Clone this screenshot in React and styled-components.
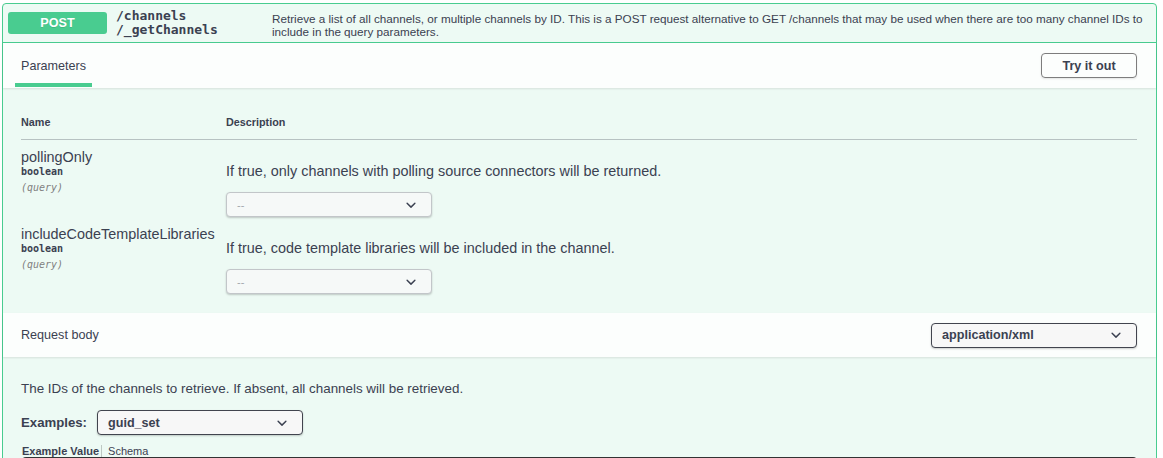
import React from "react";
import styled, { createGlobalStyle } from "styled-components";

const GlobalStyle = createGlobalStyle`
  html, body {
    margin: 0;
    padding: 0;
    overflow: hidden;
    background: #ffffff;
    font-family: "Liberation Sans", Arial, sans-serif;
    color: #3b4151;
  }
  * { box-sizing: border-box; }
`;

const Page = styled.div`
  padding: 3px 6px 0 2px;
`;

const OpBlock = styled.div`
  border: 1px solid #49cc90;
  border-radius: 4px;
  background: #edfaf4;
`;

const Summary = styled.div`
  display: flex;
  align-items: center;
  height: 39px;
  padding: 5px;
  border-bottom: 1px solid #49cc90;
`;

const Method = styled.div`
  width: 99px;
  height: 22px;
  flex-shrink: 0;
  display: flex;
  align-items: center;
  justify-content: center;
  background: #49cc90;
  border-radius: 3px;
  color: #ffffff;
  font-size: 12.6px;
  font-weight: 700;
  text-shadow: 0 1px 0 rgba(0, 0, 0, 0.1);
`;

const Path = styled.div`
  width: 156px;
  flex-shrink: 0;
  padding-left: 9px;
  font-family: "DejaVu Sans Mono", "Liberation Mono", monospace;
  font-size: 13px;
  font-weight: 600;
  line-height: 14px;
  color: #3b4151;
`;

const PathLine = styled.span`
  display: block;
  white-space: nowrap;
`;

const SummaryDesc = styled.div`
  flex: 1;
  padding: 4px 0 0 9px;
  font-size: 11.7px;
  line-height: 13px;
  color: #3b4151;
`;

const SectionHeader = styled.div`
  display: flex;
  align-items: center;
  justify-content: space-between;
  height: ${(p) => p.$h}px;
  padding: 0 19px 0 18px;
  background: rgba(255, 255, 255, 0.8);
  box-shadow: 0 1px 2px rgba(0, 0, 0, 0.1);
`;

const TabItem = styled.div`
  align-self: flex-start;
  margin: 15px 0 0 -6px;
  padding: 0 6px 9px;
  font-size: 12.6px;
  line-height: 16px;
  border-bottom: 4px solid #49cc90;
`;

const SectionTitle = styled.div`
  font-size: 12.6px;
  line-height: 16px;
`;

const Button = styled.button`
  width: 96px;
  height: 25px;
  padding: 0;
  border: 1px solid #7d7d7d;
  border-radius: 4px;
  background: transparent;
  box-shadow: 0 1px 2px rgba(0, 0, 0, 0.1);
  font-family: inherit;
  font-size: 12.6px;
  font-weight: 700;
  color: #3b4151;
`;

const ParamsBody = styled.div`
  padding: 26px 19px 19px 18px;
`;

const Row = styled.div`
  display: grid;
  grid-template-columns: 205px 1fr;
  border-bottom: ${(p) => (p.$head ? "1px solid rgba(59,65,81,0.3)" : "none")};
`;

const HeadCell = styled.div`
  font-size: 10.8px;
  font-weight: 700;
  line-height: 15px;
  padding: 1px 0 9px;
`;

const NameCell = styled.div`
  padding-top: 9px;
`;

const ParamName = styled.div`
  font-size: 14.4px;
  line-height: 17px;
`;

const ParamType = styled.div`
  font-family: "DejaVu Sans Mono", "Liberation Mono", monospace;
  font-size: 10px;
  line-height: 12px;
  font-weight: 700;
`;

const ParamIn = styled.div`
  padding-top: 4px;
  font-family: "DejaVu Sans Mono", "Liberation Mono", monospace;
  font-size: 10px;
  line-height: 12px;
  font-style: italic;
  color: #808080;
`;

const DescCell = styled.div`
  padding-top: 23px;
`;

const DescText = styled.div`
  font-size: 14.4px;
  line-height: 16px;
  margin-bottom: 13px;
`;

const SelectBox = styled.div`
  display: flex;
  align-items: center;
  width: 206px;
  height: 25px;
  padding: 0 10px;
  background: ${(p) => (p.$disabled ? "#f6f9f8" : "#f7f7f7")};
  border: 1px solid ${(p) => (p.$disabled ? "#c2c6c9" : "#41444e")};
  border-radius: 4px;
  box-shadow: 0 1px 2px 0 rgba(0, 0, 0, 0.2);
  font-size: ${(p) => (p.$disabled ? "11px" : "12.6px")};
  font-weight: ${(p) => (p.$disabled ? 400 : 700)};
  color: ${(p) => (p.$disabled ? "#a3a8ae" : "#3b4151")};
`;

const SelectText = styled.span`
  flex: 1;
  white-space: nowrap;
`;

const Chevron = () => (
  <svg width="20" height="20" viewBox="0 0 20 20">
    <path
      d="M13.418 7.859a.695.695 0 01.978 0 .68.68 0 010 .969l-3.908 3.83a.697.697 0 01-.979 0l-3.908-3.830a.68.68 0 010-.969.695.695 0 01.978 0L10 11l3.418-3.141z"
      fill="#3b4151"
    />
  </svg>
);

const Select = ({ value, disabled }) => (
  <SelectBox $disabled={disabled}>
    <SelectText>{value}</SelectText>
    <Chevron />
  </SelectBox>
);

const BodySection = styled.div`
  padding: 24px 19px 0 18px;
`;

const BodyDesc = styled.div`
  font-size: 13.4px;
  line-height: 16px;
  margin-bottom: 13px;
`;

const ExamplesRow = styled.div`
  display: flex;
  align-items: center;
  gap: 10px;
`;

const ExamplesLabel = styled.span`
  font-size: 13.2px;
  font-weight: 700;
  width: 66px;
`;

const ModelTabs = styled.div`
  display: flex;
  margin-top: 10px;
  padding-left: 1px;
  font-size: 11px;
  line-height: 12px;
`;

const ModelTab = styled.span`
  padding: ${(p) => (p.$first ? "0 2px 0 0" : "0 0 0 6px")};
  border-right: ${(p) => (p.$first ? "1px solid rgba(0,0,0,0.2)" : "none")};
  font-weight: ${(p) => (p.$active ? 700 : 400)};
`;

const CodeBlock = styled.div`
  margin-left: 1px;
  height: 60px;
  background: #333333;
  border-radius: 4px;
`;

const params = [
  {
    name: "pollingOnly",
    desc: "If true, only channels with polling source connectors will be returned.",
  },
  {
    name: "includeCodeTemplateLibraries",
    desc: "If true, code template libraries will be included in the channel.",
  },
];

export default function App() {
  return (
    <Page>
      <GlobalStyle />
      <OpBlock>
        <Summary>
          <Method>POST</Method>
          <Path>
            <PathLine>/channels</PathLine>
            <PathLine>/_getChannels</PathLine>
          </Path>
          <SummaryDesc>
            Retrieve a list of all channels, or multiple channels by ID. This is a POST request
            alternative to GET /channels that may be used when there are too many channel IDs to
            include in the query parameters.
          </SummaryDesc>
        </Summary>

        <SectionHeader $h={45}>
          <TabItem>Parameters</TabItem>
          <Button>Try it out</Button>
        </SectionHeader>

        <ParamsBody>
          <Row $head>
            <HeadCell>Name</HeadCell>
            <HeadCell>Description</HeadCell>
          </Row>
          {params.map((p) => (
            <Row key={p.name}>
              <NameCell>
                <ParamName>{p.name}</ParamName>
                <ParamType>boolean</ParamType>
                <ParamIn>(query)</ParamIn>
              </NameCell>
              <DescCell>
                <DescText>{p.desc}</DescText>
                <Select value="--" disabled />
              </DescCell>
            </Row>
          ))}
        </ParamsBody>

        <SectionHeader $h={44}>
          <SectionTitle>Request body</SectionTitle>
          <Select value="application/xml" />
        </SectionHeader>

        <BodySection>
          <BodyDesc>The IDs of the channels to retrieve. If absent, all channels will be retrieved.</BodyDesc>
          <ExamplesRow>
            <ExamplesLabel>Examples:</ExamplesLabel>
            <Select value="guid_set" />
          </ExamplesRow>
          <ModelTabs>
            <ModelTab $first $active>Example Value</ModelTab>
            <ModelTab>Schema</ModelTab>
          </ModelTabs>
          <CodeBlock />
        </BodySection>
      </OpBlock>
    </Page>
  );
}
